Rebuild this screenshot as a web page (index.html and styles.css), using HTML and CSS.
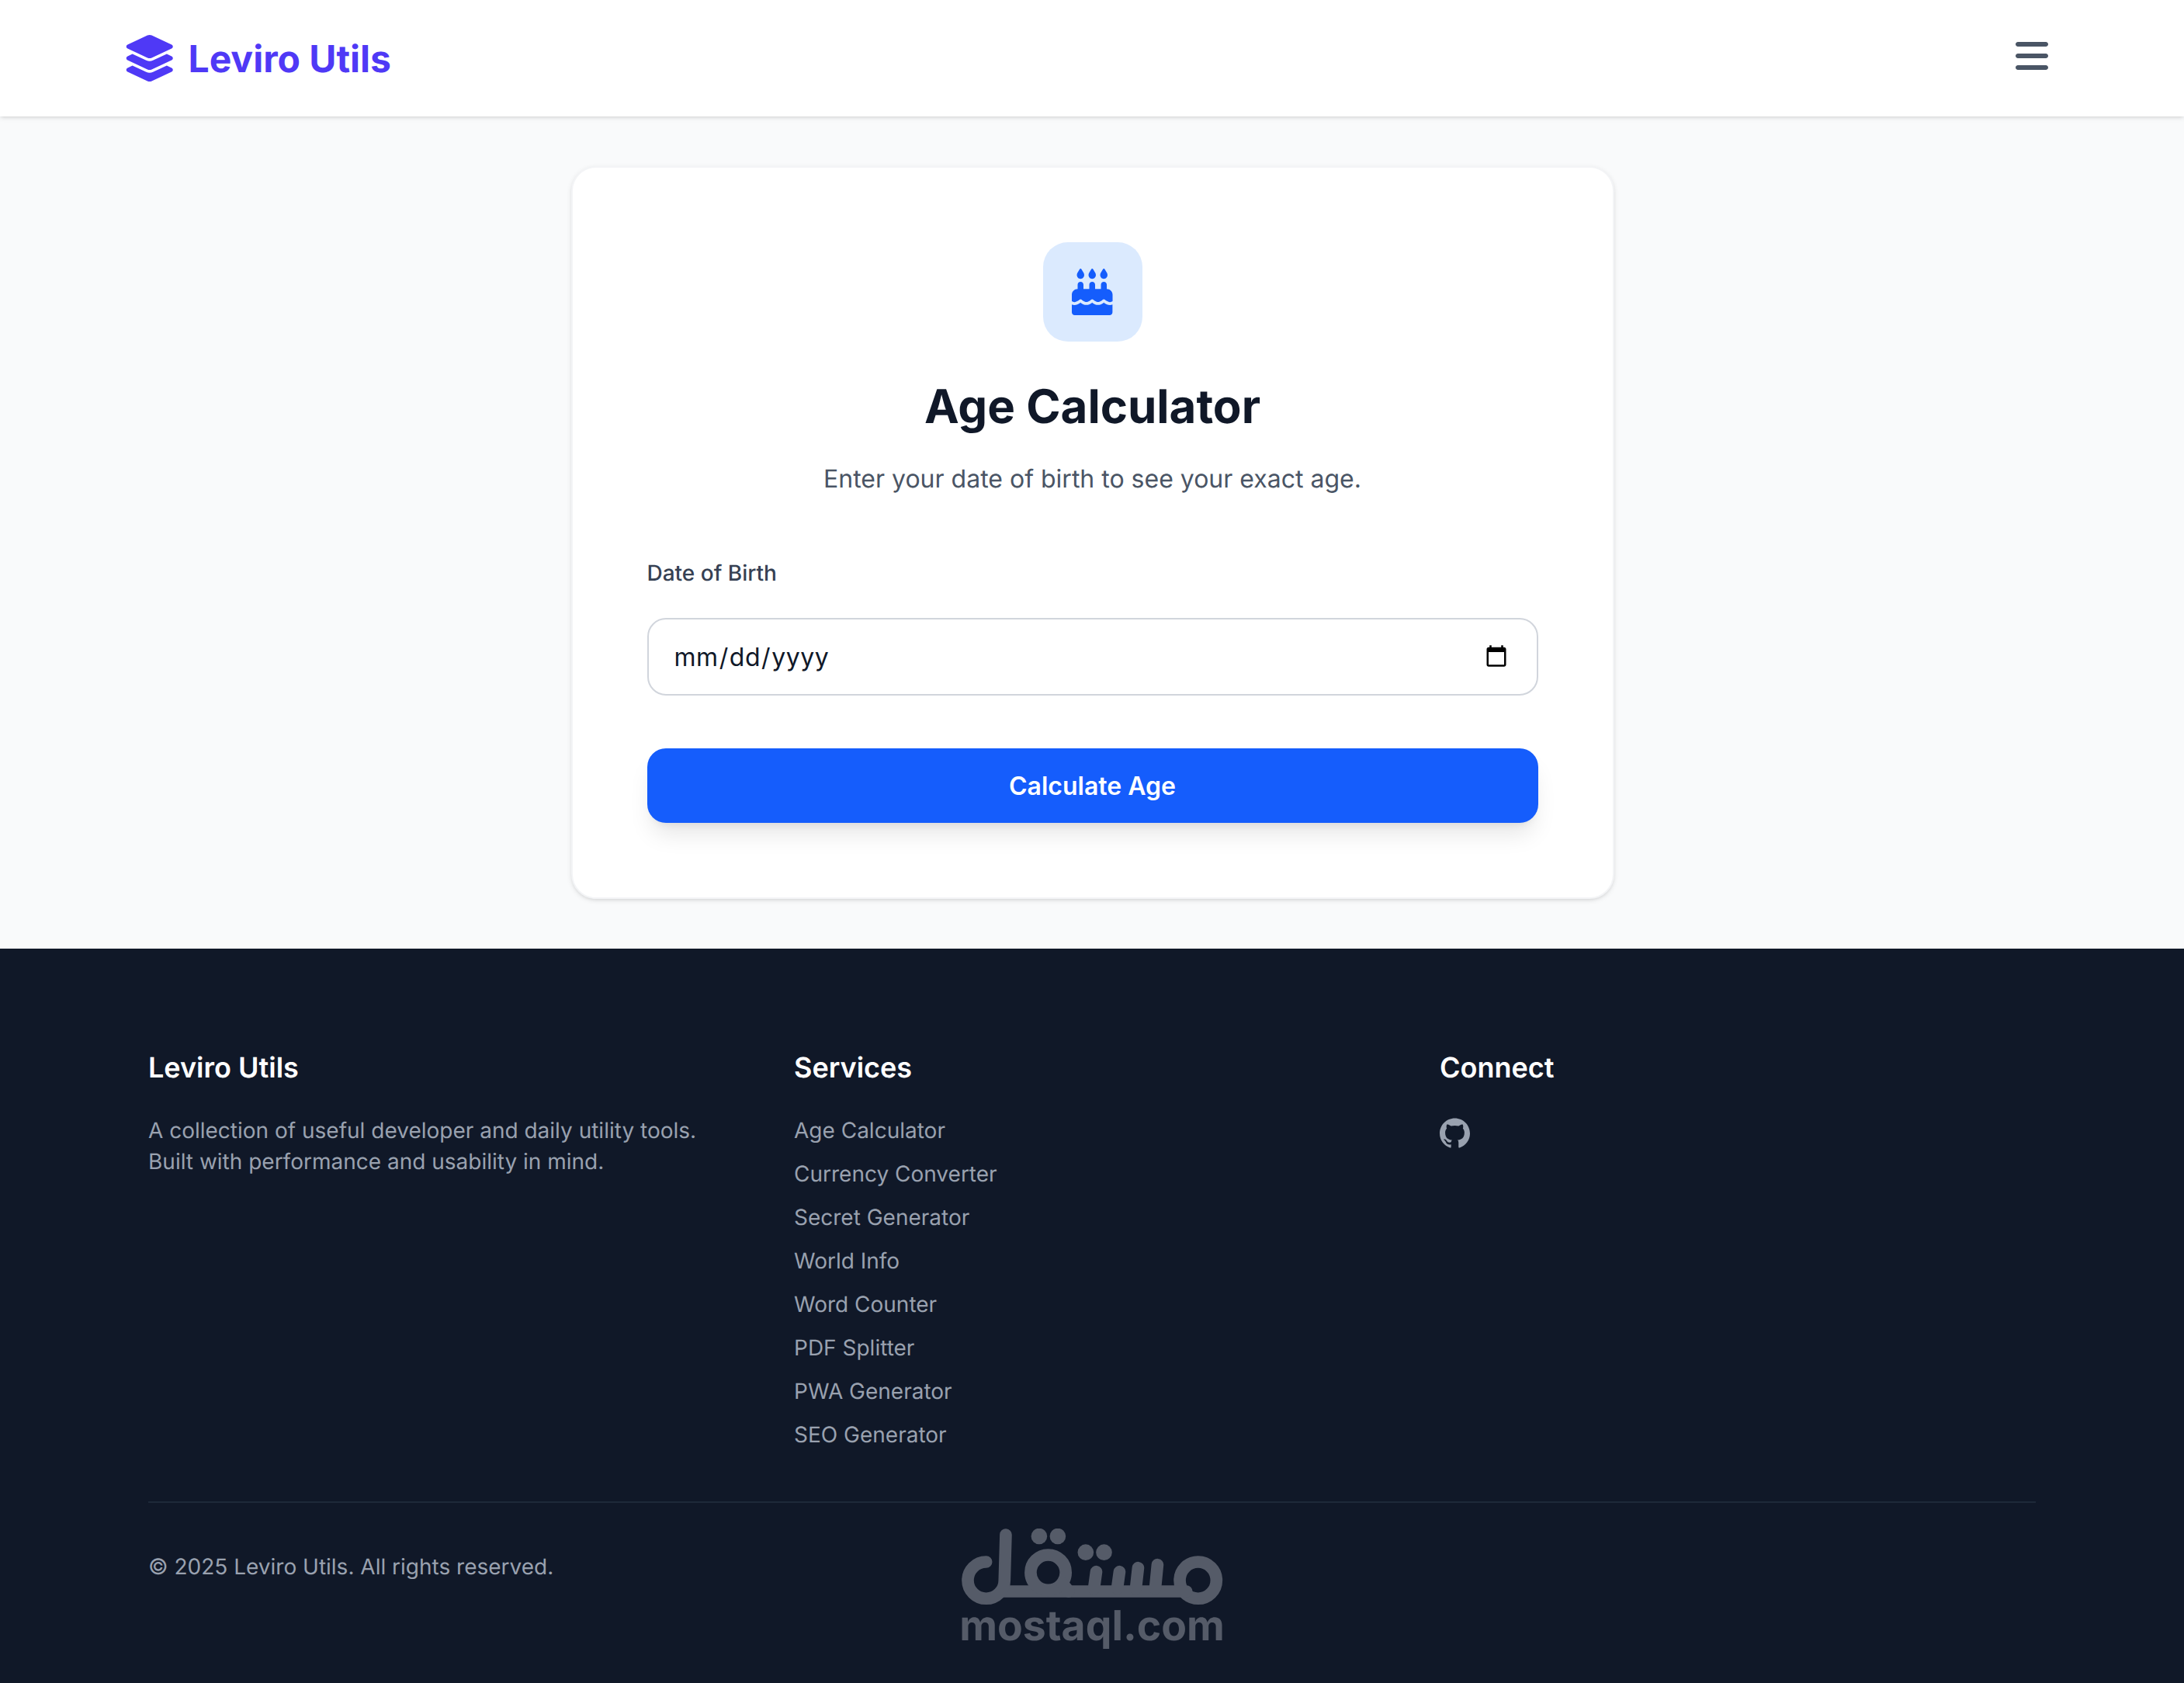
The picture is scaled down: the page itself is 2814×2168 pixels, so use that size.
FILE: index.html
```html
<!doctype html>
<html lang="en">
<head>
  <meta charset="utf-8">
  <title>Age Calculator - Leviro Utils</title>
  <link rel="stylesheet" href="styles.css">
</head>
<body>
<header class="site_header">
  <div class="header_inner">
    <a class="logo" href="#">
      <svg class="logo_icon" viewBox="0 0 576 512"><path d="M264.5 5.2c14.9-6.9 32.1-6.9 47 0l218.6 101c8.5 3.9 13.9 12.4 13.9 21.8s-5.4 17.9-13.9 21.8l-218.6 101c-14.9 6.9-32.1 6.9-47 0L45.9 149.8C37.4 145.8 32 137.3 32 128s5.4-17.9 13.9-21.8L264.5 5.2zM476.9 209.6l53.2 24.6c8.5 3.9 13.9 12.4 13.9 21.8s-5.4 17.9-13.9 21.8l-218.6 101c-14.9 6.9-32.1 6.9-47 0L45.9 277.8C37.4 273.8 32 265.3 32 256s5.4-17.9 13.9-21.8l53.2-24.6 152 70.2c23.4 10.8 50.4 10.8 73.8 0l152-70.2zm-152 198.2l152-70.2 53.2 24.6c8.5 3.9 13.9 12.4 13.9 21.8s-5.4 17.9-13.9 21.8l-218.6 101c-14.9 6.9-32.1 6.9-47 0L45.9 405.8C37.4 401.8 32 393.3 32 384s5.4-17.9 13.9-21.8l53.2-24.6 152 70.2c23.4 10.8 50.4 10.8 73.8 0z"/></svg>
      <span>Leviro Utils</span>
    </a>
    <button class="menu_btn" type="button" aria-label="Menu">
      <svg class="menu_icon" viewBox="0 0 448 512"><path d="M0 96C0 78.3 14.3 64 32 64H416c17.7 0 32 14.3 32 32s-14.3 32-32 32H32C14.3 128 0 113.7 0 96zM0 256c0-17.7 14.3-32 32-32H416c17.7 0 32 14.3 32 32s-14.3 32-32 32H32c-17.7 0-32-14.3-32-32zM448 416c0 17.7-14.3 32-32 32H32c-17.7 0-32-14.3-32-32s14.3-32 32-32H416c17.7 0 32 14.3 32 32z"/></svg>
    </button>
  </div>
</header>

<main class="main">
  <section class="card">
    <div class="card_icon">
      <svg class="cake_icon" viewBox="0 0 448 512"><path d="M86.4 5.5L61.8 47.6C58 54.1 56 61.6 56 69.2V72c0 22.1 17.9 40 40 40s40-17.9 40-40V69.2c0-7.6-2-15-5.8-21.6L105.6 5.5C103.6 2.1 100 0 96 0s-7.6 2.1-9.6 5.5zm128 0L189.8 47.6c-3.8 6.5-5.8 14-5.8 21.6V72c0 22.1 17.9 40 40 40s40-17.9 40-40V69.2c0-7.6-2-15-5.8-21.6L233.6 5.5C231.6 2.1 228 0 224 0s-7.6 2.1-9.6 5.5zm128 0L317.8 47.6c-3.8 6.5-5.8 14-5.8 21.6V72c0 22.1 17.9 40 40 40s40-17.9 40-40V69.2c0-7.6-2-15-5.8-21.6L361.6 5.5C359.6 2.1 356 0 352 0s-7.6 2.1-9.6 5.5z"/><path d="M128 176c0-17.7-14.3-32-32-32s-32 14.3-32 32v48c-35.3 0-64 28.7-64 64v71c8.3 5.2 18.1 9 28.8 9c13.5 0 27.2-6.1 38.4-13.4c5.4-3.5 9.9-7.1 13-9.7c1.5-1.3 2.7-2.4 3.5-3.1l.9-.9c3.1-3.2 7.4-4.9 11.9-4.8s8.6 2.1 11.6 5.4l.8 .8c.7 .7 1.7 1.7 3.1 3c2.8 2.6 6.8 6.1 11.8 9.5c10.2 7.1 23 13.1 36.3 13.1s26.1-6 36.3-13.1c5-3.5 9-6.9 11.8-9.5c1.4-1.3 2.4-2.3 3.1-3l.8-.8c3-3.5 7.4-5.4 12-5.4s9 2 12 5.4l.8 .8c.7 .7 1.7 1.7 3.1 3c2.8 2.6 6.8 6.1 11.8 9.5c10.2 7.1 23 13.1 36.3 13.1s26.1-6 36.3-13.1c5-3.5 9-6.9 11.8-9.5c1.4-1.3 2.4-2.3 3.1-3l.8-.8c3-3.2 7.1-5.2 11.6-5.4s8.8 1.6 11.9 4.8l.9 .9c.8 .7 2 1.8 3.5 3.1c3.1 2.6 7.6 6.2 13 9.7c11.2 7.3 24.9 13.4 38.4 13.4c10.7 0 20.5-3.9 28.8-9V288c0-35.3-28.7-64-64-64V176c0-17.7-14.3-32-32-32s-32 14.3-32 32v48H256V176c0-17.7-14.3-32-32-32s-32 14.3-32 32v48H128V176z"/><path d="M0 394.6c8.5 3.3 18.2 5.4 28.8 5.4c22.5 0 42.4-9.9 55.8-18.6c4.1-2.7 7.8-5.4 10.9-7.8c2.8 2.4 6.1 5 9.9 7.6c12.6 8.8 32.2 18.4 54.1 18.4s41.5-9.6 54.1-18.4c3.8-2.6 7.1-5.2 9.9-7.6c2.8 2.4 6.1 5 9.9 7.6c12.6 8.8 32.2 18.4 54.1 18.4s41.5-9.6 54.1-18.4c3.8-2.6 7.1-5.2 9.9-7.6c3.1 2.4 6.8 5.1 10.9 7.8c13.4 8.7 33.3 18.6 55.8 18.6c10.6 0 20.3-2.1 28.8-5.4V480c0 17.7-14.3 32-32 32H32c-17.7 0-32-14.3-32-32V394.6z"/></svg>
    </div>
    <h1 class="card_title">Age Calculator</h1>
    <p class="card_desc">Enter your date of birth to see your exact age.</p>
    <form class="age_form">
      <label class="field_label" for="dob">Date of Birth</label>
      <input class="date_input" id="dob" type="date">
      <button class="submit_btn" type="button">Calculate Age</button>
    </form>
  </section>
</main>

<footer class="site_footer">
  <div class="footer_inner">
    <div class="footer_grid">
      <div>
        <h3 class="footer_title">Leviro Utils</h3>
        <p class="footer_text">A collection of useful developer and daily utility tools. Built with performance and usability in mind.</p>
      </div>
      <div>
        <h3 class="footer_title">Services</h3>
        <ul class="footer_links">
          <li><a href="#">Age Calculator</a></li>
          <li><a href="#">Currency Converter</a></li>
          <li><a href="#">Secret Generator</a></li>
          <li><a href="#">World Info</a></li>
          <li><a href="#">Word Counter</a></li>
          <li><a href="#">PDF Splitter</a></li>
          <li><a href="#">PWA Generator</a></li>
          <li><a href="#">SEO Generator</a></li>
        </ul>
      </div>
      <div>
        <h3 class="footer_title">Connect</h3>
        <a class="github_link" href="#" aria-label="GitHub">
          <svg class="github_icon" viewBox="0 0 24 24"><path d="M12 .297c-6.63 0-12 5.373-12 12 0 5.303 3.438 9.8 8.205 11.385.6.113.82-.258.82-.577 0-.285-.01-1.04-.015-2.04-3.338.724-4.042-1.61-4.042-1.61C4.422 18.07 3.633 17.7 3.633 17.7c-1.087-.744.084-.729.084-.729 1.205.084 1.838 1.236 1.838 1.236 1.07 1.835 2.809 1.305 3.495.998.108-.776.417-1.305.76-1.605-2.665-.3-5.466-1.332-5.466-5.93 0-1.31.465-2.38 1.235-3.22-.135-.303-.54-1.523.105-3.176 0 0 1.005-.322 3.3 1.23.96-.267 1.98-.399 3-.405 1.02.006 2.04.138 3 .405 2.28-1.552 3.285-1.23 3.285-1.23.645 1.653.24 2.873.12 3.176.765.84 1.23 1.91 1.23 3.22 0 4.61-2.805 5.625-5.475 5.92.42.36.81 1.096.81 2.22 0 1.606-.015 2.896-.015 3.286 0 .315.21.69.825.57C20.565 22.092 24 17.592 24 12.297c0-6.627-5.373-12-12-12"/></svg>
        </a>
      </div>
    </div>
    <div class="footer_bottom">
      <p class="copyright">© 2025 Leviro Utils. All rights reserved.</p>
    </div>
  </div>
  <div class="watermark">
    <svg class="watermark_logo" viewBox="115 118 1012 300" role="img" aria-label="مستقل">
      <g class="wm_strokes">
        <circle cx="1030" cy="318" r="71"/>
        <path d="M270 361H985"/>
        <path d="M873 258L864 350M798 270L789 350M726 285L717 350M636 285L627 350"/>
        <circle cx="450" cy="288" r="68"/>
        <path d="M505 330L530 361"/>
        <path d="M210 247A71 71 0 1 0 281 318L286 142"/>
      </g>
      <g class="wm_dots">
        <circle cx="415" cy="148" r="31"/>
        <circle cx="487" cy="148" r="31"/>
        <circle cx="595" cy="210" r="31"/>
        <circle cx="666" cy="210" r="31"/>
      </g>
    </svg>
    <span class="watermark_text">mostaql.com</span>
  </div>
</footer>
</body>
</html>
```

FILE: styles.css
```css
* {
  box-sizing: border-box;
}
body {
  margin: 0;
  min-height: 100vh;
  display: flex;
  flex-direction: column;
  background: #f9fafb;
  font-family: "Inter", "Liberation Sans", sans-serif;
  color: #101828;
  text-rendering: geometricPrecision;
}
a {
  text-decoration: none;
  color: inherit;
}

.site_header {
  height: 150px;
  background: #fff;
  box-shadow: 0 2px 6px rgba(0, 0, 0, 0.1), 0 2px 4px -2px rgba(0, 0, 0, 0.1);
}
.header_inner {
  max-width: 2560px;
  height: 100%;
  margin: 0 auto;
  padding: 0 32px;
  display: flex;
  align-items: center;
  justify-content: space-between;
}
.logo {
  display: flex;
  align-items: center;
  gap: 16px;
  font-size: 48px;
  font-weight: 700;
  color: #4f39f6;
}
.logo_icon {
  width: 67.5px;
  height: 60px;
  fill: currentColor;
}
.menu_btn {
  padding: 0 16px 7px;
  border: 0;
  background: none;
  color: #4a5565;
  display: flex;
}
.menu_icon {
  width: 42px;
  height: 48px;
  fill: currentColor;
}

.main {
  padding: 64px 0 64px 1px;
  display: flex;
  justify-content: center;
}
.card {
  width: 1344px;
  padding: 96px;
  background: #fff;
  border: 2px solid #f3f4f6;
  border-radius: 32px;
  box-shadow: 0 2px 6px rgba(0, 0, 0, 0.1), 0 2px 4px -2px rgba(0, 0, 0, 0.1);
  text-align: center;
}
.card_icon {
  width: 128px;
  height: 128px;
  margin: 0 auto 48px;
  border-radius: 32px;
  background: #dbeafe;
  display: flex;
  align-items: center;
  justify-content: center;
}
.cake_icon {
  width: 52.5px;
  height: 60px;
  fill: #155dfc;
}
.card_title {
  margin: 0 0 33px;
  font-size: 60px;
  line-height: 72px;
  font-weight: 700;
  color: #101828;
}
.card_desc {
  margin: 0 0 77px;
  font-size: 32px;
  line-height: 48px;
  color: #4a5565;
}
.age_form {
  text-align: left;
}
.field_label {
  display: block;
  margin-bottom: 38px;
  font-size: 28px;
  line-height: 40px;
  font-weight: 500;
  color: #364153;
}
.date_input {
  display: block;
  width: 100%;
  height: 100px;
  padding: 0 34px 0 32px;
  border: 2px solid #d1d5dc;
  border-radius: 24px;
  background: #fff;
  font-family: inherit;
  font-size: 32px;
  letter-spacing: 0.55px;
  color: #101828;
}
.submit_btn {
  display: block;
  width: 100%;
  height: 96px;
  margin-top: 68px;
  border: 0;
  border-radius: 24px;
  background: #155dfc;
  box-shadow: 0 20px 30px -6px rgba(0, 0, 0, 0.1), 0 8px 12px -8px rgba(0, 0, 0, 0.1);
  font-family: inherit;
  font-size: 32px;
  font-weight: 600;
  color: #fff;
}

.site_footer {
  position: relative;
  flex-grow: 1;
  padding: 128px 0;
  background: #101828;
  color: #99a1af;
}
.footer_inner {
  max-width: 2560px;
  margin: 0 auto;
  padding: 0 64px;
}
.footer_grid {
  display: grid;
  grid-template-columns: repeat(3, 1fr);
  gap: 64px;
}
.footer_title {
  margin: 0 0 36px;
  font-size: 36px;
  line-height: 50px;
  font-weight: 600;
  color: #fff;
}
.footer_text {
  margin: 0;
  font-size: 28px;
  line-height: 40px;
}
.footer_links {
  margin: 0;
  padding: 0;
  list-style: none;
  display: flex;
  flex-direction: column;
  gap: 16px;
  font-size: 28px;
  line-height: 40px;
}
.github_link {
  display: block;
  width: 39px;
  padding-top: 4px;
}
.github_icon {
  display: block;
  width: 39px;
  height: 39px;
  fill: #99a1af;
}
.footer_bottom {
  margin-top: 66px;
  padding-top: 62px;
  border-top: 2px solid #1e2939;
}
.copyright {
  margin: 0;
  font-size: 28px;
  line-height: 40px;
}

.watermark {
  position: absolute;
  left: 1238px;
  top: 747px;
  width: 338px;
  display: flex;
  flex-direction: column;
  align-items: center;
  color: #555b68;
}
.watermark_logo {
  display: block;
  width: 337px;
  height: 100px;
}
.wm_strokes {
  fill: none;
  stroke: #555b68;
  stroke-width: 47;
  stroke-linecap: round;
}
.wm_dots {
  fill: #555b68;
}
.watermark_text {
  margin-top: -2px;
  font-family: "Inter", "Liberation Sans", sans-serif;
  font-size: 53.5px;
  line-height: 54px;
  font-weight: 700;
}
```
